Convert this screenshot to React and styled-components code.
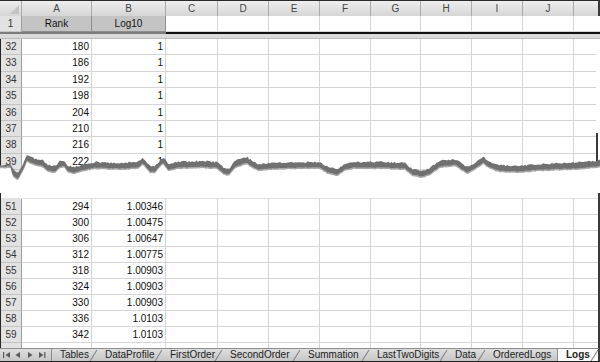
import React from 'react';
import styled, { createGlobalStyle } from 'styled-components';

const GlobalStyle = createGlobalStyle`
  html, body { margin: 0; padding: 0; background: #fff; }
  body { font-family: 'Liberation Sans', Arial, sans-serif; }
  * { box-sizing: border-box; }
`;

const HEAD_COLS = '22px 70px 74px 52px 51px 51px 51px 50px 51px 51px 51px 51px';
const BODY_COLS = '21px 70px 74px 52px 51px 51px 51px 50px 51px 51px 51px 51px';
const LETTERS = ['A', 'B', 'C', 'D', 'E', 'F', 'G', 'H', 'I', 'J', 'K'];

const topRows = [
	[32, '180', '1'],
	[33, '186', '1'],
	[34, '192', '1'],
	[35, '198', '1'],
	[36, '204', '1'],
	[37, '210', '1'],
	[38, '216', '1'],
	[39, '222', '1'],
	[40, '228', '1'],
];

const bottomRows = [
	[51, '294', '1.00346'],
	[52, '300', '1.00475'],
	[53, '306', '1.00647'],
	[54, '312', '1.00775'],
	[55, '318', '1.00903'],
	[56, '324', '1.00903'],
	[57, '330', '1.00903'],
	[58, '336', '1.0103'],
	[59, '342', '1.0103'],
];

const tabs = [
	{ name: 'Tables', w: 45 },
	{ name: 'DataProfile', w: 65 },
	{ name: 'FirstOrder', w: 60 },
	{ name: 'SecondOrder', w: 78 },
	{ name: 'Summation', w: 69 },
	{ name: 'LastTwoDigits', w: 78 },
	{ name: 'Data', w: 38 },
	{ name: 'OrderedLogs', w: 72 },
	{ name: 'Logs', w: 41, active: true },
];

// torn edge outline (absolute page y)
const WAVE = [
	[0, 165], [11, 165], [14, 171], [18, 173], [22, 166], [27, 155], [33, 158], [42, 160],
	[48, 165], [55, 166], [60, 161], [64, 160], [68, 166], [75, 167], [85, 164], [95, 162],
	[120, 163], [138, 162], [143, 158], [150, 166], [155, 166], [163, 157], [168, 164],
	[178, 162], [200, 161], [217, 162], [224, 168], [229, 169], [235, 161], [247, 157],
	[252, 161], [258, 164], [270, 163], [300, 162], [320, 162], [328, 167], [337, 169],
	[345, 164], [352, 162], [380, 162], [405, 163], [412, 169], [422, 171], [430, 168],
	[440, 161], [455, 159], [461, 163], [467, 167], [475, 163], [483, 157], [490, 162],
	[500, 165], [517, 166], [540, 164], [570, 163], [597, 161], [600, 160],
];
const TEAR_TOP = 148;

const waveAt = (x) => {
	for (let i = 1; i < WAVE.length; i++) {
		const [x1, y1] = WAVE[i];
		const [x0, y0] = WAVE[i - 1];
		if (x <= x1) return y0 + ((y1 - y0) * (x - x0)) / (x1 - x0 || 1);
	}
	return WAVE[WAVE.length - 1][1];
};
const noise = (i) => {
	const s = Math.sin(i * 12.9898 + 4.1) * 43758.5453;
	return s - Math.floor(s);
};

const buildTear = () => {
	const top = [];
	const bottom = [];
	for (let x = 0; x <= 600; x += 1.5) {
		const y = waveAt(x) - TEAR_TOP;
		const thick = x < 12 ? 1.5 : 5.5;
		top.push([x, y + (noise(x) - 0.5) * 1.8]);
		bottom.push([x, y + thick + (noise(x + 300) - 0.5) * 0.8]);
	}
	const pts = (a) => a.map(([x, y]) => `${x.toFixed(1)},${y.toFixed(1)}`).join(' ');
	return {
		paper: `${pts(top.map(([x, y]) => [x, y + 1]))} 600,60 0,60`,
		shadow: `${pts(top)} ${pts([...bottom].reverse())}`,
		fade: `${pts(bottom.map(([x, y]) => [x, y - 1]))} ${pts([...bottom].reverse().map(([x, y]) => [x, y + 1.6]))}`,
	};
};
const tear = buildTear();

const Sheet = styled.div`
	position: relative;
	width: 600px;
	height: 362px;
	overflow: hidden;
	background: #fff;
	font-size: 10px;
	color: #0e0e0e;
	display: flex;
	flex-direction: column;
`;

const Row = styled.div`
	display: grid;
	grid-template-columns: ${(p) => p.$cols};
	height: ${(p) => p.$h}px;
	flex: none;
	overflow: hidden;
`;

const HeaderRow = styled(Row)`
	border-top: 1px solid #2b2b2b;
	border-right: 2px solid #3a3a3a;
	background: linear-gradient(#eeeeee, #d5d5d5);
`;

const ColHead = styled.div`
	border-right: 1px solid #ababab;
	border-bottom: 1px solid #9d9d9d;
	text-align: center;
	line-height: 15px;
	color: #454545;
`;

const Corner = styled(ColHead)`
	position: relative;
	&::after {
		content: '';
		position: absolute;
		right: 2px;
		bottom: 2px;
		border-style: solid;
		border-width: 0 0 9px 9px;
		border-color: transparent transparent #c4c4c4 transparent;
	}
`;

const RowHead = styled.div`
	background: #e2e2e2;
	border-right: 1px solid #9d9d9d;
	border-bottom: 1px solid #c3c3c3;
	text-align: center;
	line-height: ${(p) => p.$lh}px;
	color: #333;
`;

const Cell = styled.div`
	border-right: 1px solid #d5d5d5;
	border-bottom: 1px solid #d5d5d5;
	text-align: right;
	padding: 0 2px;
	line-height: ${(p) => p.$lh}px;
	white-space: nowrap;
	overflow: hidden;
`;

const LabelCell = styled.div`
	background: #c4c4c4;
	border-right: 1px solid #8d8d8d;
	border-bottom: 1px solid #8d8d8d;
	text-align: center;
	line-height: 15px;
	color: #111;
`;

const FreezeBar = styled.div`
	flex: none;
	height: 7px;
	border-bottom: 1px solid #bcbcbc;
	background:
		linear-gradient(to right, #7c7c7c 0 166px, #111 166px) top / 100% 2px no-repeat,
		#dadada;
`;

const Pane = styled.div`
	flex: none;
	height: ${(p) => p.$h}px;
	overflow: hidden;
	border-left: 1px solid #262626;
	border-right: 2px solid ${(p) => (p.$edge ? '#3a3a3a' : 'transparent')};
	background: ${(p) =>
		p.$edgeFrom ? `linear-gradient(#3a3a3a, #3a3a3a) right bottom / 2px ${p.$edgeFrom}px no-repeat` : 'none'};
	padding-right: ${(p) => (p.$edge ? 0 : 2)}px;
`;

const PaneGap = styled.div`
	height: 6px;
	border-bottom: 1px solid #e2e2e2;
`;

const Tear = styled.svg`
	position: absolute;
	left: 0;
	top: ${TEAR_TOP}px;
	width: 600px;
	height: 45px;
`;

const TabBar = styled.div`
	flex: 1;
	display: flex;
	align-items: stretch;
	background: linear-gradient(#dedede, #c6c6c6);
	border-top: 1px solid #8e8e8e;
	border-bottom: 2px solid #1e1e1e;
	border-right: 2px solid #3a3a3a;
`;

const Nav = styled.div`
	width: 52px;
	display: flex;
	align-items: center;
	padding-left: 3px;
	border-right: 1px solid #8a8a8a;
`;

const Tab = styled.div`
	position: relative;
	width: ${(p) => p.$w}px;
	padding-left: 8px;
	line-height: 12px;
	color: #222;
	white-space: nowrap;
	font-weight: ${(p) => (p.$active ? 700 : 400)};
	background: ${(p) => (p.$active ? '#fbfbfb' : 'transparent')};
	border-left: ${(p) => (p.$active ? '1px solid #8a8a8a' : 'none')};
	&::after {
		content: '';
		position: absolute;
		right: 3px;
		top: 0;
		width: 1px;
		height: 13px;
		background: #7e7e7e;
		transform: rotate(32deg);
		display: ${(p) => (p.$hideSep ? 'none' : 'block')};
	}
`;

const NavIcons = () => (
	<svg width="46" height="8" viewBox="0 0 46 8">
		<g fill="#5a5a5a">
			<rect x="0" y="1" width="1.2" height="6" />
			<path d="M7 1 L2.5 4 L7 7 Z" />
			<path d="M17 1 L12.5 4 L17 7 Z" />
			<path d="M25 1 L29.5 4 L25 7 Z" />
			<path d="M36 1 L40.5 4 L36 7 Z" />
			<rect x="41.2" y="1" width="1.2" height="6" />
		</g>
	</svg>
);

const BodyRow = ({ n, a, b, h }) => (
	<Row $cols={BODY_COLS} $h={h}>
		<RowHead $lh={h - 1}>{n}</RowHead>
		<Cell $lh={h - 1}>{a}</Cell>
		<Cell $lh={h - 1}>{b}</Cell>
		{LETTERS.slice(2).map((l) => (
			<Cell key={l} $lh={h - 1} />
		))}
	</Row>
);

const App = () => (
	<>
		<GlobalStyle />
		<Sheet>
			<HeaderRow $cols={HEAD_COLS} $h={16}>
				<Corner />
				{LETTERS.map((l) => (
					<ColHead key={l}>{l === 'K' ? '' : l}</ColHead>
				))}
			</HeaderRow>
			<Row $cols={HEAD_COLS} $h={16}>
				<RowHead $lh={15}>1</RowHead>
				<LabelCell>Rank</LabelCell>
				<LabelCell>Log10</LabelCell>
				{LETTERS.slice(2).map((l) => (
					<Cell key={l} $lh={15} />
				))}
			</Row>
			<FreezeBar />
			<Pane $h={154} $edgeFrom={60}>
				{topRows.map(([n, a, b]) => (
					<BodyRow key={n} n={n} a={a} b={b} h={16.4} />
				))}
			</Pane>
			<Pane $h={155} $edge>
				<PaneGap />
				{bottomRows.map(([n, a, b]) => (
					<BodyRow key={n} n={n} a={a} b={b} h={16} />
				))}
				<BodyRow n="" a="" b="" h={16} />
			</Pane>
			<TabBar>
				<Nav>
					<NavIcons />
				</Nav>
				{tabs.map((t, i) => (
					<Tab key={t.name} $w={t.w} $active={t.active} $hideSep={tabs[i + 1]?.active}>
						{t.name}
					</Tab>
				))}
			</TabBar>
			<Tear viewBox="0 0 600 45" preserveAspectRatio="none">
				<defs>
					<filter id="soft" x="-5%" y="-50%" width="110%" height="200%">
						<feGaussianBlur stdDeviation="0.6" />
					</filter>
				</defs>
				<polygon points={tear.paper} fill="#fff" />
				<g filter="url(#soft)">
					<polygon points={tear.fade} fill="#a9a9a9" />
					<polygon points={tear.shadow} fill="#707070" />
				</g>
			</Tear>
		</Sheet>
	</>
);

export default App;
